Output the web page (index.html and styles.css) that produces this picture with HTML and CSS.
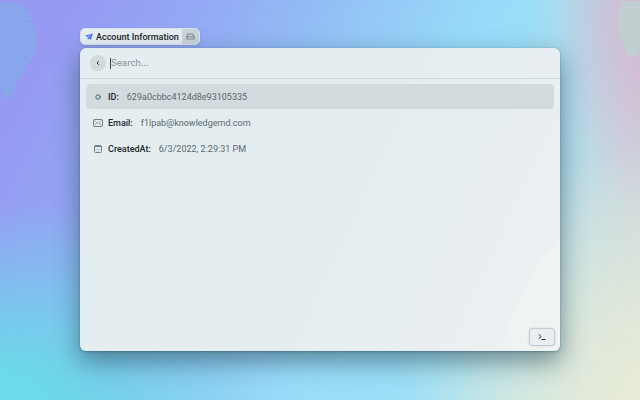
FILE: index.html
```html
<!DOCTYPE html>
<html lang="en">
<head>
<meta charset="utf-8">
<meta name="viewport" content="width=device-width, initial-scale=1">
<title>Account Information</title>
<link rel="stylesheet" href="styles.css">
</head>
<body>
<svg class="blob blob-left" viewBox="0 0 36 102" aria-hidden="true">
  <defs><pattern id="dots" width="4" height="4" patternUnits="userSpaceOnUse"><rect width="4" height="4" fill="#8aa9eb"/><rect width="1" height="1" fill="#7492f1"/><rect x="2" y="2" width="1" height="1" fill="#809df0"/></pattern></defs>
  <path fill="url(#dots)" d="M0 3H16Q25 5 29 14Q36 25 36 40L35 54L29 62L24 71L18 79L15 89L5 101L2 93L0 75Z"/>
</svg>
<svg class="blob blob-right" viewBox="0 0 23 57" aria-hidden="true">
  <defs><pattern id="grain" width="2" height="2" patternUnits="userSpaceOnUse"><rect width="2" height="2" fill="#c4d1d3"/><rect width="1" height="1" fill="#bcc7ca"/></pattern></defs>
  <path fill="url(#grain)" d="M6 1H23V55L13 57L9 52L3 38Q-1 25 1 13Z"/>
</svg>
<main class="launcher">
  <header class="tab">
    <h1 class="tab-title">
      <svg class="plane" viewBox="0 0 16 16" aria-hidden="true"><path fill="#5b7af5" d="M0 5L16 1L12 14L8 11L6 14L5 9L13 4L4 8Z"/></svg>
      Account Information
    </h1>
    <button class="tab-action" type="button" aria-label="Open tray">
      <svg viewBox="0 0 16 16" aria-hidden="true"><path d="M1.500 8L4 3.500H12L14.500 8V12.500H1.500ZM1.500 8.500H14.500"/></svg>
    </button>
  </header>
  <section class="panel">
    <div class="search">
      <button class="back" type="button" aria-label="Back"><svg viewBox="0 0 8 8" aria-hidden="true"><path d="M4.500 2.500L3 4L4.500 5.500"/></svg></button>
      <span class="caret"></span>
      <input class="search-input" type="text" placeholder="Search..." aria-label="Search">
    </div>
    <ul class="rows">
      <li class="row selected">
        <svg class="icon" viewBox="0 0 10 10" aria-hidden="true"><circle class="ring" cx="5" cy="5" r="2.200"/></svg>
        <span class="label">ID:</span><span class="value">629a0cbbc4124d8e93105335</span>
      </li>
      <li class="row">
        <svg class="icon" viewBox="0 0 10 10" aria-hidden="true"><rect x=".5" y="1.500" width="9" height="7" rx="1"/><path class="thin" d="M1.500 2.500L5 5.500L8.500 2.500M1.500 7.500L3.800 5M8.500 7.500L6.200 5"/></svg>
        <span class="label">Email:</span><span class="value">f1lpab@knowledgemd.com</span>
      </li>
      <li class="row">
        <svg class="icon" viewBox="0 0 10 10" aria-hidden="true"><rect x="1.500" y="1.500" width="7" height="7" rx="1"/><path d="M1.500 2.500H8.500"/><path class="faint" d="M3 5.500H7M3 7H6"/></svg>
        <span class="label">CreatedAt:</span><span class="value">6/3/2022, 2:29:31 PM</span>
      </li>
    </ul>
    <svg class="glow" viewBox="0 0 58 110" aria-hidden="true"><path fill="#eff5f3" d="M58 0V110H0Q4 84 19 58Q32 26 43 16Z"/></svg>
    <footer class="footer">
      <button class="terminal" type="button" aria-label="Actions"><svg viewBox="0 0 10 10" aria-hidden="true"><path d="M2 2.500L4 4.500L2 6.500M5 7.500H8"/></svg></button>
    </footer>
  </section>
</main>
</body>
</html>
```
FILE: styles.css
```css
* {
  box-sizing: border-box;
}

body {
  position: relative;
  min-height: 100vh;
  margin: 0;
  display: flex;
  overflow: hidden;
  font: 9px/12px Roboto, "Liberation Sans", sans-serif;
  color: #1d2628;
  background:
    radial-gradient(ellipse 42% 52% at 0% 103%, #6bdae9 18%, #6bdae900),
    radial-gradient(ellipse 15% 50% at 102% 3%, #d6b3d0, #d6b3d000),
    radial-gradient(ellipse 42% 65% at 104% 100%, #e7ebd8 15%, #e7ebd800),
    radial-gradient(ellipse 23% 120% at 104% 35%, #cbd6de 20%, #c8dddf00),
    linear-gradient(118deg, #969af2 8%, #93a8f4 24%, #93bff5 39%, #98dcf9 58%, #9cdff6 75%, #c3e6e6 92%);
}

button {
  padding: 0;
  border: 0;
  display: grid;
  place-items: center;
}

svg {
  fill: none;
  stroke-linecap: round;
  stroke-linejoin: round;
}

.blob {
  position: absolute;
  top: 0;
}

.blob-left {
  left: 0;
  width: 36px;
  height: 102px;
}

.blob-right {
  right: 0;
  width: 23px;
  height: 57px;
}

.launcher {
  position: relative;
  flex: 1;
  padding: 28px 80px 49px;
  display: flex;
  flex-direction: column;
  align-items: stretch;
  gap: 3px;
}

.tab {
  align-self: flex-start;
  display: flex;
  height: 17px;
  border: 1px solid #d9e2f0;
  border-radius: 5px;
  overflow: hidden;
  background: #e6eef2;
  box-shadow: 0 1px 3px #33507030;
}

.tab-title {
  margin: 0;
  padding: 0 3px 0 4px;
  display: flex;
  align-items: center;
  gap: 3px;
  font-size: 9px;
  line-height: 12px;
  font-weight: 500;
}

.plane {
  width: 8px;
  height: 8px;
}

.tab-action {
  width: 17px;
  background: #cad4da;
}

.tab-action svg {
  width: 9px;
  height: 9px;
  stroke: #7f8b8e;
  stroke-width: 2;
}

.panel {
  position: relative;
  flex: 1;
  display: flex;
  flex-direction: column;
  border-radius: 6px;
  overflow: hidden;
  background: linear-gradient(115deg, #e4eef1 55%, #e9eef1 80%, #edf2f3);
  box-shadow: 0 0 1px #42637590, 0 1px 2px #35576770, 0 10px 24px 1px #28485790;
}

.search {
  display: flex;
  align-items: center;
  height: 31px;
  padding: 0 10px;
  border-bottom: 1px solid #cfdadd;
}

.back {
  width: 16px;
  height: 16px;
  margin-right: 4px;
  border-radius: 50%;
  background: #d0d9dc;
}

.back svg {
  width: 8px;
  height: 8px;
  stroke: #202a2c;
  stroke-width: 1;
}

.caret {
  width: 1px;
  height: 11px;
  background: #374447;
}

.search-input {
  flex: 1;
  min-width: 0;
  padding: 0;
  border: 0;
  outline: 0;
  background: transparent;
  font: 9px/12px Inter, "Liberation Sans", sans-serif;
  color: inherit;
}

.search-input::placeholder {
  color: #849295;
  opacity: 1;
}

.rows {
  flex: 1;
  margin: 0;
  padding: 5px 6px;
  display: flex;
  flex-direction: column;
  gap: 1px;
  list-style: none;
}

.row {
  height: 25px;
  padding: 0 7px;
  display: flex;
  align-items: center;
  border-radius: 4px;
}

.selected {
  background: #d2dcde;
}

.icon {
  width: 10px;
  height: 10px;
  margin-right: 5px;
  stroke: #748083;
  stroke-width: 1;
}

.ring {
  stroke: #566366;
}

.faint {
  opacity: .3;
}

.thin {
  opacity: .6;
}

.label {
  margin-right: 8px;
  font-weight: 500;
}

.value {
  color: #5a686b;
}

.glow {
  position: absolute;
  right: 0;
  bottom: 0;
  width: 58px;
  height: 110px;
  opacity: .7;
}

.footer {
  position: relative;
  display: flex;
  justify-content: flex-end;
  padding: 0 5px 5px;
}

.terminal {
  width: 26px;
  height: 18px;
  border: 1px solid #c3c9d3;
  border-radius: 4px;
  background: #e9eef1;
  box-shadow: 0 0 2px #c3c9d3;
}

.terminal svg {
  width: 10px;
  height: 10px;
  stroke: #202a2c;
  stroke-width: 1;
}
```
